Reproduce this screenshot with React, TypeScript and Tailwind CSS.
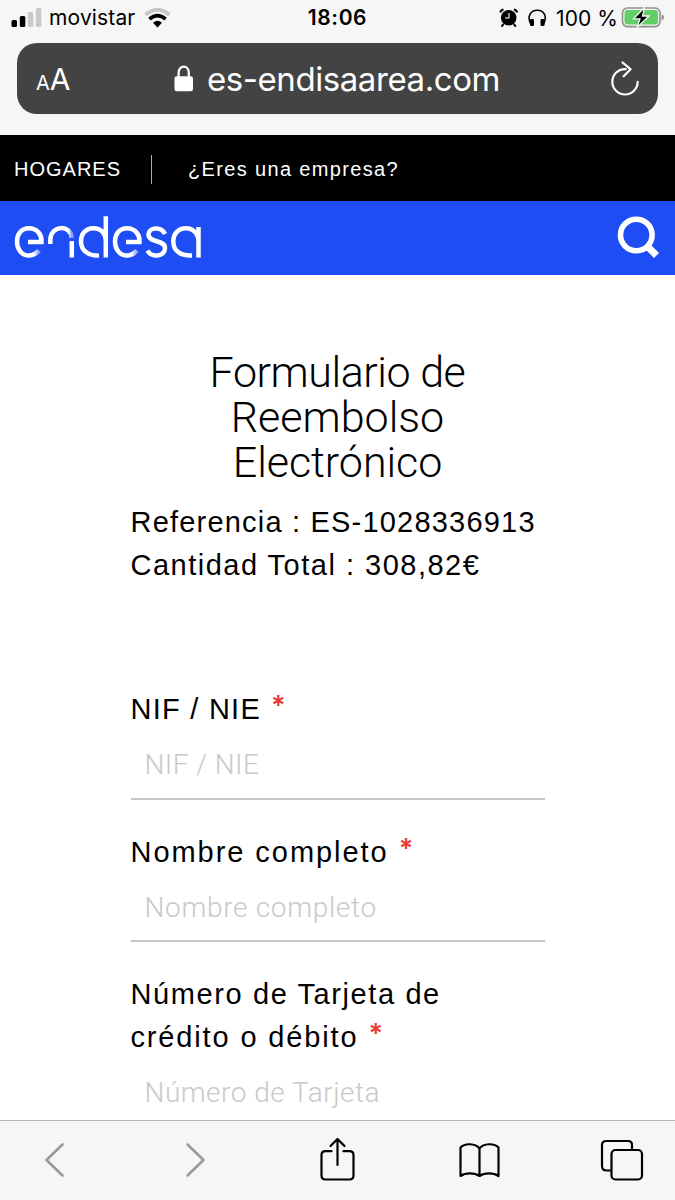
import React from "react";

const labelText = "font-['Liberation_Sans'] text-[29px] leading-[43px] text-black";

function StatusBar() {
  return (
    <div className="flex h-[43px] items-start font-['Inter'] text-[20px] leading-[24px] text-black">
      <div className="flex w-[225px] items-start pt-[6px] pl-[11px]">
        <svg width="31" height="20" viewBox="0 0 31 20" className="mt-[1px]">
          <rect x="0.5" y="13" width="5.5" height="7" rx="1.5" fill="#000" />
          <rect x="8.8" y="9" width="5.5" height="11" rx="1.5" fill="#000" />
          <rect x="16.8" y="5" width="5.5" height="15" rx="1.5" fill="#c9c9c9" />
          <rect x="24.8" y="1" width="5.5" height="19" rx="1.5" fill="#c9c9c9" />
        </svg>
        <span className="ml-[7px] w-[87px] text-[21px] tracking-[0.15px]">movistar</span>
        <svg width="27" height="20" viewBox="0 0 27 20" className="ml-[8px] mt-[2px]">
          <path d="M1.6 6.8Q13.5 -3.2 25.4 6.8" fill="none" stroke="#c6c6c6" strokeWidth="3.8" />
          <path d="M5.4 11.2Q13.5 4.2 21.6 11.2" fill="none" stroke="#000" strokeWidth="3.6" />
          <path d="M9 14.8Q13.5 10.8 18 14.8L13.5 19.5Z" fill="#000" />
        </svg>
      </div>
      <div className="w-[225px] pt-[6px] text-center text-[21px] font-semibold tracking-[0.6px]">18:06</div>
      <div className="flex w-[225px] items-start pt-[7px] pl-[49px]">
        <svg width="20" height="20" viewBox="0 0 20 20" className="mt-[1px]">
          <path d="M1.200 4.500Q1.800 2 4.500 1.400M14.900 1.400Q17.600 2 18.200 4.500M4.500 16L2.600 18.600M14.800 16l2 2.600" fill="none" stroke="#000" strokeWidth="2" />
          <circle cx="9.700" cy="9.800" r="7.800" fill="#000" />
          <path d="M10 5v5H6" fill="none" stroke="#fff" strokeWidth="1.100" />
        </svg>
        <svg width="20" height="20" viewBox="0 0 20 20" className="ml-[9px]">
          <path d="M2.800 17C-1.500 9 3 3.300 9.300 3.300S19.800 9 15.500 17" fill="none" stroke="#000" strokeWidth="1.600" />
          <rect x="2" y="12" width="4" height="7" rx="1.300" fill="#000" />
          <rect x="12.500" y="12" width="4" height="7" rx="1.300" fill="#000" />
        </svg>
        <span className="ml-[8px] w-[62px] text-[21px] whitespace-nowrap tracking-[0.1px]">100 %</span>
        <svg width="44" height="22" viewBox="0 0 44 22" className="ml-[3px] shrink-0">
          <rect x="1.500" y="1" width="37.500" height="18.600" rx="5" fill="none" stroke="#8f8f8f" strokeWidth="1.600" />
          <rect x="3.500" y="3" width="33.500" height="14.600" rx="3" fill="#60cf68" />
          <path d="M40.600 7.200q2.400.4 2.400 3.100t-2.400 3.100z" fill="#8f8f8f" />
          <path d="M23.500 0.500L12.500 11.800h6.500l-3 8.700L28 9h-6.500z" fill="#000" stroke="#f6f6f6" strokeWidth="1.300" />
        </svg>
      </div>
    </div>
  );
}

function AddressBar() {
  return (
    <div className="mx-[17px] flex h-[71px] items-center rounded-[20px] bg-[#434343] font-['Inter'] text-white">
      <div className="flex w-[157px] items-baseline pt-[5px] pl-[19px]">
        <span className="text-[20px] leading-[32px]">A</span>
        <span className="text-[30px] leading-[32px]">A</span>
      </div>
      <svg width="20" height="27" viewBox="0 0 20 27">
        <path d="M4.600 13V8C4.600-0.500 14.800-.5 14.800 8v5" fill="none" stroke="#fff" strokeWidth="2.300" />
        <rect x="0.500" y="11.300" width="18.500" height="15" rx="2.200" fill="#fff" />
      </svg>
      <span className="ml-[13px] w-[400px] text-[33px] leading-[40px] tracking-[-0.430px]">es-endisaarea.com</span>
      <svg width="30" height="35" viewBox="0 0 30 35" className="mr-[18px] ml-[3px] shrink-0">
        <path d="M15.800 8.100H15A12.700 12.700 0 1 0 27.700 20.800M12.600 1.500L20.500 8.200L13.700 15.200" fill="none" stroke="#fff" strokeWidth="2.200" strokeLinecap="round" strokeLinejoin="round" />
      </svg>
    </div>
  );
}

function Logo() {
  return (
    <svg width="188" height="44" viewBox="0 0 188 44" role="img" aria-label="endesa">
      <defs>
        <linearGradient id="tail" x1="0" y1="0" x2="1" y2="0">
          <stop offset="0.500" stopColor="#fff" />
          <stop offset="1" stopColor="#fff" stopOpacity="0.450" />
        </linearGradient>
        <linearGradient id="drop" x1="0" y1="0" x2="1" y2="0">
          <stop offset="0.850" stopColor="#fff" />
          <stop offset="1" stopColor="#fff" stopOpacity="0.450" />
        </linearGradient>
      </defs>
      <g fill="none" stroke="#fff" strokeWidth="4.500">
        <path d="M14 26H27.500C28 18 22.500 12.300 15 12.300C7.500 12.300 3 18 3 25.500S7.500 39.500 15 39.500" />
        <path d="M14.500 39.500Q21 39.500 25 34.500" stroke="url(#tail)" />
        <path d="M36.300 28V24C36.300 8.500 57.700 8.500 57.700 22" stroke="url(#drop)" />
        <path d="M57.800 25V41.500" />
        <path d="M85 39.500C75 40 67 35 67 25.500C67 17.500 72 12.300 79.500 12.300S91.800 17.500 91.800 25.500M91.800 0.300V41.500" />
        <path d="M112 26H125.500C126 18 120.500 12.300 113 12.300C105.500 12.300 101 18 101 25.500S105.500 39.500 113 39.500" />
        <path d="M112.500 39.500Q119 39.500 123 34.500" stroke="url(#tail)" />
        <path d="M151 18C147.500 10 134.500 11 134.500 18.500C134.500 27 151 23.500 151 32C151 41 137 42 133.500 34.500" />
        <path d="M178 39.500C166 40 159.300 34.500 159.300 25.500C159.300 17.500 164.500 12.300 171.800 12.300S184.500 17.500 184.500 25.500M184.500 11V41.500" />
      </g>
    </svg>
  );
}

function SiteHeader() {
  return (
    <header>
      <div className="flex h-[66px] items-center bg-black pt-[2px] font-['Liberation_Sans'] text-[20px] text-white">
        <span className="ml-[14px] w-[137px] tracking-[1px]">HOGARES</span>
        <span className="h-[29px] w-px bg-[#aaa]" />
        <span className="ml-[36px] tracking-[1.350px]">¿Eres una empresa?</span>
      </div>
      <div className="flex h-[74px] items-start justify-between bg-[#1d4df3] pt-[15px] pr-[15px] pl-[14px]">
        <Logo />
        <svg width="43" height="43" viewBox="0 0 43 43">
          <circle cx="19.300" cy="19" r="15.800" fill="none" stroke="#fff" strokeWidth="5.600" />
          <path d="M30 30L39.500 39.500" stroke="#fff" strokeWidth="7" />
        </svg>
      </div>
    </header>
  );
}

interface FieldProps {
  children: React.ReactNode;
  placeholder: string;
  labelClass: string;
  hintClass: string;
}

function Field({ children, placeholder, labelClass, hintClass }: FieldProps) {
  return (
    <div className="mb-[31px]">
      <div className={`${labelText} ${labelClass}`}>
        {children}
        <span className="ml-[10px] inline-block h-[20px] align-[4px] font-['Inter'] text-[27px] leading-[20px] font-semibold tracking-normal text-[#e63a2e]">*</span>
      </div>
      <div className="h-[68.500px] border-b-2 border-[#c6c6c6] pl-[14px]">
        <span className={`block font-['Roboto'] text-[28px] leading-[68px] font-light text-[#c9c9c9] ${hintClass}`}>{placeholder}</span>
      </div>
    </div>
  );
}

function Toolbar() {
  return (
    <div className="flex h-[80px] shrink-0 justify-center border-t border-[#b5b5b5] bg-[#f6f6f6] pt-[15px]">
      <div className="grid w-[707px] shrink-0 grid-cols-5 justify-items-center">
        <svg width="24" height="46" viewBox="0 0 24 46" fill="none" stroke="#999" strokeWidth="2.600" strokeLinecap="round" strokeLinejoin="round">
          <path d="M19.500 8.500L3.500 24L19.500 39.500" />
        </svg>
        <svg width="24" height="46" viewBox="0 0 24 46" fill="none" stroke="#999" strokeWidth="2.600" strokeLinecap="round" strokeLinejoin="round">
          <path d="M3.500 8.500L19.500 24L3.500 39.500" />
        </svg>
        <svg width="38" height="46" viewBox="0 0 38 46" fill="none" stroke="#000" strokeWidth="2.200" strokeLinecap="round" strokeLinejoin="round">
          <path d="M13.500 15.200H7.500Q3.500 15.200 3.500 19.200V39.500Q3.500 43.500 7.500 43.500H31.500Q35.500 43.500 35.500 39.500V19.200Q35.500 15.200 31.500 15.200H25.500M19.500 29V3M12.500 10L19.500 3L26.500 10" />
        </svg>
        <svg width="44" height="46" viewBox="0 0 44 46" fill="none" stroke="#000" strokeWidth="2.200" strokeLinecap="round" strokeLinejoin="round">
          <path d="M22.500 12.500C18.500 7 7.500 7 3.500 11.500V40C8.500 36.500 17.500 36.500 22.500 40C27.500 36.500 36.500 36.500 41.500 40V11.500C37.500 7 26.500 7 22.500 12.500V40" />
        </svg>
        <svg width="44" height="46" viewBox="0 0 44 46" fill="none" stroke="#000" strokeWidth="2.200" strokeLinejoin="round" className="ml-[4px]">
          <path d="M11 34.500H6.500Q2 34.500 2 30V9Q2 5 6.500 5H28Q32 5 32 9V13" />
          <rect x="11.500" y="14" width="30.500" height="29.500" rx="4" />
        </svg>
      </div>
    </div>
  );
}

export default function App() {
  return (
    <div className="flex h-[1200px] w-[675px] flex-col overflow-hidden bg-white">
      <div className="h-[135px] shrink-0 bg-[#f6f6f6]">
        <StatusBar />
        <AddressBar />
      </div>
      <SiteHeader />
      <main className="min-h-0 flex-1 overflow-hidden pt-[75px]">
        <div className="mx-auto w-[414px]">
          <h1 className="text-center font-['Roboto'] text-[43px] leading-[45px] font-light text-black">
            <span className="block tracking-[-0.450px]">Formulario de</span>
            <span className="block">Reembolso</span>
            <span className="block tracking-[-0.050px]">Electrónico</span>
          </h1>
          <div className={`mt-[16px] mb-[101px] whitespace-nowrap ${labelText}`}>
            <div className="tracking-[1.200px]">Referencia : ES-1028336913</div>
            <div className="tracking-[1.500px]">Cantidad Total : 308,82€</div>
          </div>
          <Field placeholder="NIF / NIE" labelClass="tracking-[1.250px]" hintClass="tracking-[0.400px]">
            NIF / NIE
          </Field>
          <Field placeholder="Nombre completo" labelClass="tracking-[1.950px]" hintClass="tracking-[0.680px]">
            Nombre completo
          </Field>
          <Field placeholder="Número de Tarjeta" labelClass="tracking-[1.600px]" hintClass="tracking-[0.500px]">
            Número de Tarjeta de
            <br />
            <span className="tracking-[1.850px]">crédito o débito</span>
          </Field>
        </div>
      </main>
      <Toolbar />
    </div>
  );
}
